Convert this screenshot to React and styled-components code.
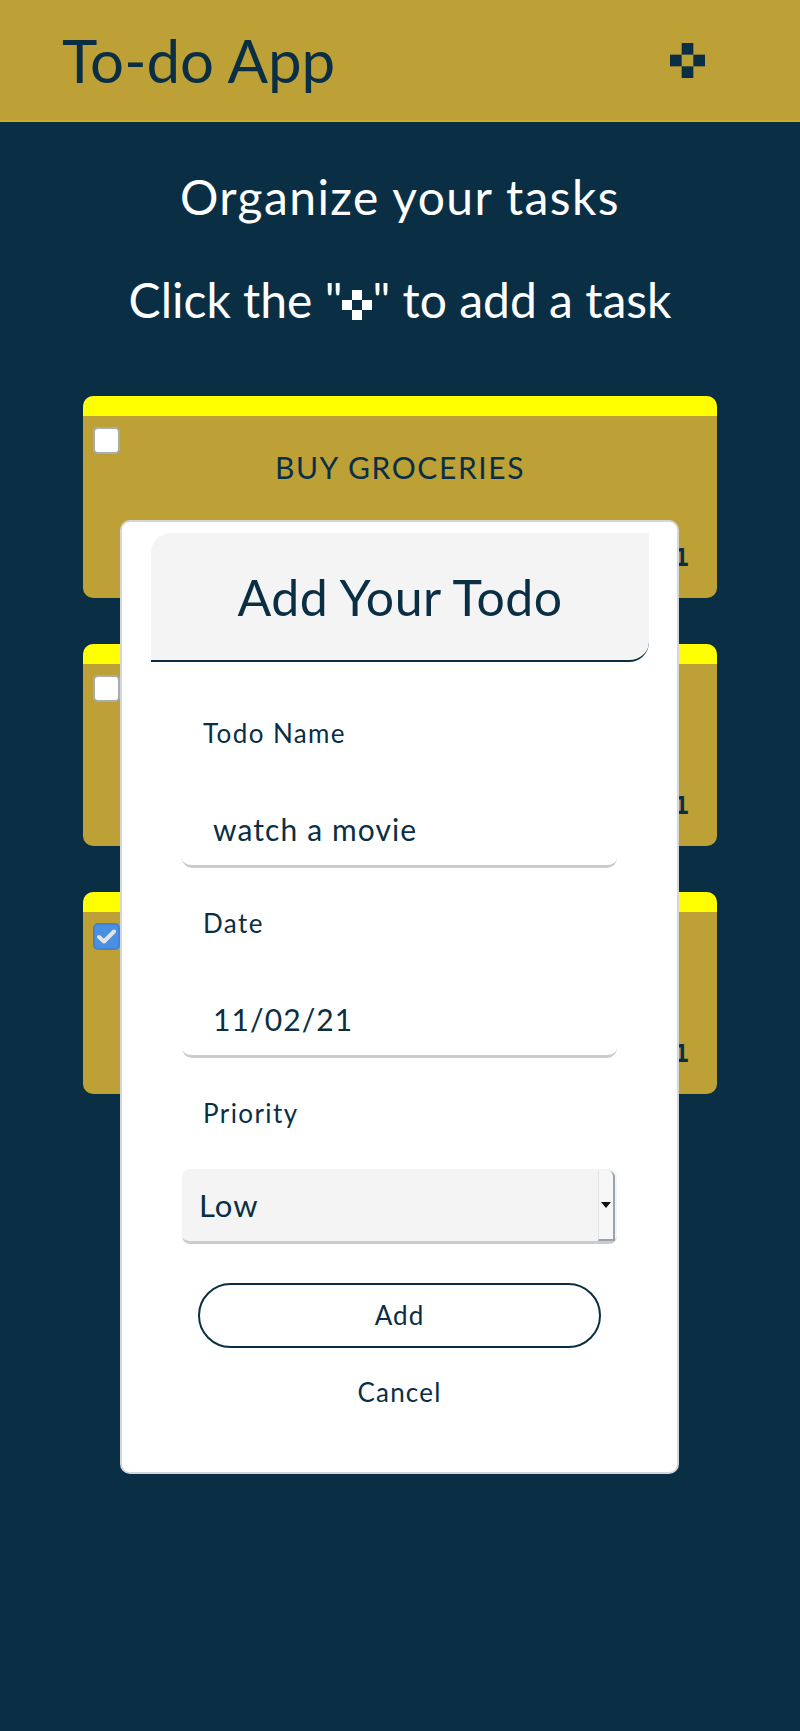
import React from 'react';
import styled, { createGlobalStyle } from 'styled-components';

const NAVY = '#0a2f45';
const GOLD = '#bda036';
const FONT = 'Lato, "Open Sans", sans-serif';

const GlobalStyle = createGlobalStyle`
  html, body { margin: 0; padding: 0; background: ${NAVY}; }
  body { font-family: ${FONT}; }
  * { box-sizing: border-box; }
`;

const Page = styled.div`
  position: relative;
  min-height: 1731px;
  background: ${NAVY};
`;

const Header = styled.header`
  height: 122px;
  background: ${GOLD};
  border-bottom: 2px solid #cdac2c;
  display: flex;
  align-items: center;
  justify-content: space-between;
  padding: 0 95px 0 62px;
`;

const AppTitle = styled.h1`
  margin: 0;
  font-size: 60px;
  font-weight: 400;
  line-height: 1.2;
  color: ${NAVY};
`;

const IconButton = styled.button`
  border: none;
  background: none;
  padding: 0;
  display: flex;
  color: ${NAVY};
  cursor: pointer;
`;

const Main = styled.main`
  display: flex;
  flex-direction: column;
  align-items: center;
`;

const Heading = styled.h2`
  margin: ${(p) => p.$top}px 0 0;
  font-size: 48px;
  font-weight: 400;
  line-height: 1.2;
  letter-spacing: ${(p) => p.$spacing || 0}px;
  color: #ffffff;
  text-align: center;
`;

const InlineIcon = styled.span`
  display: inline-flex;
  vertical-align: -2px;
  color: #ffffff;
`;

const CardList = styled.ul`
  list-style: none;
  margin: 68px 0 0;
  padding: 0;
  width: 634px;
  display: flex;
  flex-direction: column;
  gap: 46px;
`;

const Card = styled.li`
  height: 202px;
  background: ${GOLD};
  border-top: 20px solid #ffff00;
  border-radius: 10px;
  padding: 11px 10px;
  display: grid;
  grid-template-columns: 27px 1fr 27px;
  grid-template-rows: auto 1fr auto;
`;

const Check = styled.span`
  grid-column: 1;
  grid-row: 1;
  width: 27px;
  height: 27px;
  border-radius: 5px;
  border: 2px solid ${(p) => (p.$checked ? '#3f83d6' : '#a9adb1')};
  background: ${(p) => (p.$checked ? '#4a90e2' : '#ffffff')};
  display: flex;
  align-items: center;
  justify-content: center;
`;

const CardTitle = styled.h3`
  grid-column: 2;
  grid-row: 1;
  margin: 0;
  padding-top: 22px;
  font-size: 30px;
  font-weight: 400;
  line-height: 1.2;
  letter-spacing: 1.6px;
  text-transform: uppercase;
  text-align: center;
  color: ${NAVY};
`;

const CardDate = styled.span`
  grid-column: 1 / -1;
  grid-row: 3;
  justify-self: end;
  margin: 0 18px 14px 0;
  font-family: "DejaVu Sans Mono", monospace;
  font-size: 24px;
  font-weight: 700;
  line-height: 1.2;
  color: ${NAVY};
`;

const Modal = styled.div`
  position: absolute;
  top: 520px;
  left: 120px;
  width: 559px;
  background: #ffffff;
  border: 2px solid #d3d7db;
  border-radius: 10px;
  padding: 11px 28px 64px 29px;
  display: flex;
  flex-direction: column;
`;

const ModalTitle = styled.h2`
  margin: 0;
  padding: 34px 0 33px;
  background: #f4f4f4;
  border-bottom: 2px solid ${NAVY};
  border-radius: 20px 0 20px 0;
  font-size: 50px;
  font-weight: 400;
  line-height: 1.2;
  letter-spacing: 0.5px;
  text-align: center;
  color: ${NAVY};
`;

const Form = styled.form`
  display: flex;
  flex-direction: column;
  padding: 0 32px 0 31px;
`;

const Label = styled.label`
  margin: ${(p) => p.$top}px 0 0 21px;
  font-size: 26px;
  line-height: 1.2;
  letter-spacing: 1.4px;
  color: ${NAVY};
`;

const TextInput = styled.input`
  margin-top: 49px;
  height: 70px;
  width: 100%;
  border: none;
  border-bottom: 3px solid #c9cbce;
  border-radius: 10px;
  padding: 0 31px 6px;
  background: #ffffff;
  font-family: ${FONT};
  font-size: 30px;
  letter-spacing: 1.1px;
  color: ${NAVY};
  outline: none;
`;

const SelectBox = styled.div`
  margin-top: 39px;
  height: 75px;
  display: flex;
  background: #f4f4f4;
  border-radius: 8px;
  border-bottom: 3px solid #c9cbce;
`;

const Select = styled.select`
  flex: 1;
  appearance: none;
  border: none;
  background: transparent;
  padding: 0 0 0 17px;
  font-family: ${FONT};
  font-size: 31px;
  letter-spacing: 1px;
  color: ${NAVY};
  outline: none;
`;

const ArrowBox = styled.span`
  width: 17px;
  margin: 2px 2px 0 0;
  background: #f7f7f7;
  border-left: 1px solid #e2e2e2;
  border-right: 2px solid #9aa3ab;
  border-bottom: 2px solid #9aa3ab;
  border-radius: 0 6px 0 0;
  display: flex;
  align-items: center;
  justify-content: center;
  &::after {
    content: '';
    border-left: 5px solid transparent;
    border-right: 5px solid transparent;
    border-top: 6px solid #111;
  }
`;

const AddButton = styled.button`
  margin: 39px auto 0;
  width: 403px;
  height: 65px;
  border: 2px solid ${NAVY};
  border-radius: 33px;
  background: #ffffff;
  font-family: ${FONT};
  font-size: 26px;
  letter-spacing: 1px;
  color: ${NAVY};
  cursor: pointer;
`;

const CancelButton = styled.button`
  margin: 29px auto 0;
  border: none;
  background: none;
  padding: 0;
  font-family: ${FONT};
  font-size: 26px;
  line-height: 1.2;
  letter-spacing: 1.2px;
  color: ${NAVY};
  cursor: pointer;
`;

function BlockPlus({ size }) {
  return (
    <svg width={size} height={size} viewBox="0 0 3 3" fill="currentColor">
      <rect x="1" y="0" width="1" height="1" />
      <rect x="0" y="1" width="1" height="1" />
      <rect x="2" y="1" width="1" height="1" />
      <rect x="1" y="2" width="1" height="1" />
    </svg>
  );
}

function CheckMark() {
  return (
    <svg width="19" height="15" viewBox="0 0 19 15">
      <path d="M2 8 L7 12.5 L17 2.5" fill="none" stroke="#e4e4e4" strokeWidth="4" strokeLinecap="round" strokeLinejoin="round" />
    </svg>
  );
}

const todos = [
  { title: 'Buy groceries', date: '11/02/21', done: false },
  { title: 'Gym', date: '11/02/21', done: false },
  { title: 'Clean the house', date: '11/02/21', done: true },
];

export default function App() {
  return (
    <Page>
      <GlobalStyle />
      <Header>
        <AppTitle>To-do App</AppTitle>
        <IconButton aria-label="Add task">
          <BlockPlus size={35} />
        </IconButton>
      </Header>
      <Main>
        <Heading $top={46} $spacing={1.4}>Organize your tasks</Heading>
        <Heading $top={45}>
          Click the "<InlineIcon><BlockPlus size={30} /></InlineIcon>" to add a task
        </Heading>
        <CardList>
          {todos.map((t) => (
            <Card key={t.title}>
              <Check $checked={t.done}>{t.done && <CheckMark />}</Check>
              <CardTitle>{t.title}</CardTitle>
              <CardDate>{t.date}</CardDate>
            </Card>
          ))}
        </CardList>
      </Main>
      <Modal>
        <ModalTitle>Add Your Todo</ModalTitle>
        <Form onSubmit={(e) => e.preventDefault()}>
          <Label $top={56} htmlFor="name">Todo Name</Label>
          <TextInput id="name" defaultValue="watch a movie" />
          <Label $top={40} htmlFor="date">Date</Label>
          <TextInput id="date" defaultValue="11/02/21" />
          <Label $top={40} htmlFor="priority">Priority</Label>
          <SelectBox>
            <Select id="priority" defaultValue="low">
              <option value="low">Low</option>
              <option value="medium">Medium</option>
              <option value="high">High</option>
            </Select>
            <ArrowBox />
          </SelectBox>
          <AddButton type="submit">Add</AddButton>
          <CancelButton type="button">Cancel</CancelButton>
        </Form>
      </Modal>
    </Page>
  );
}
